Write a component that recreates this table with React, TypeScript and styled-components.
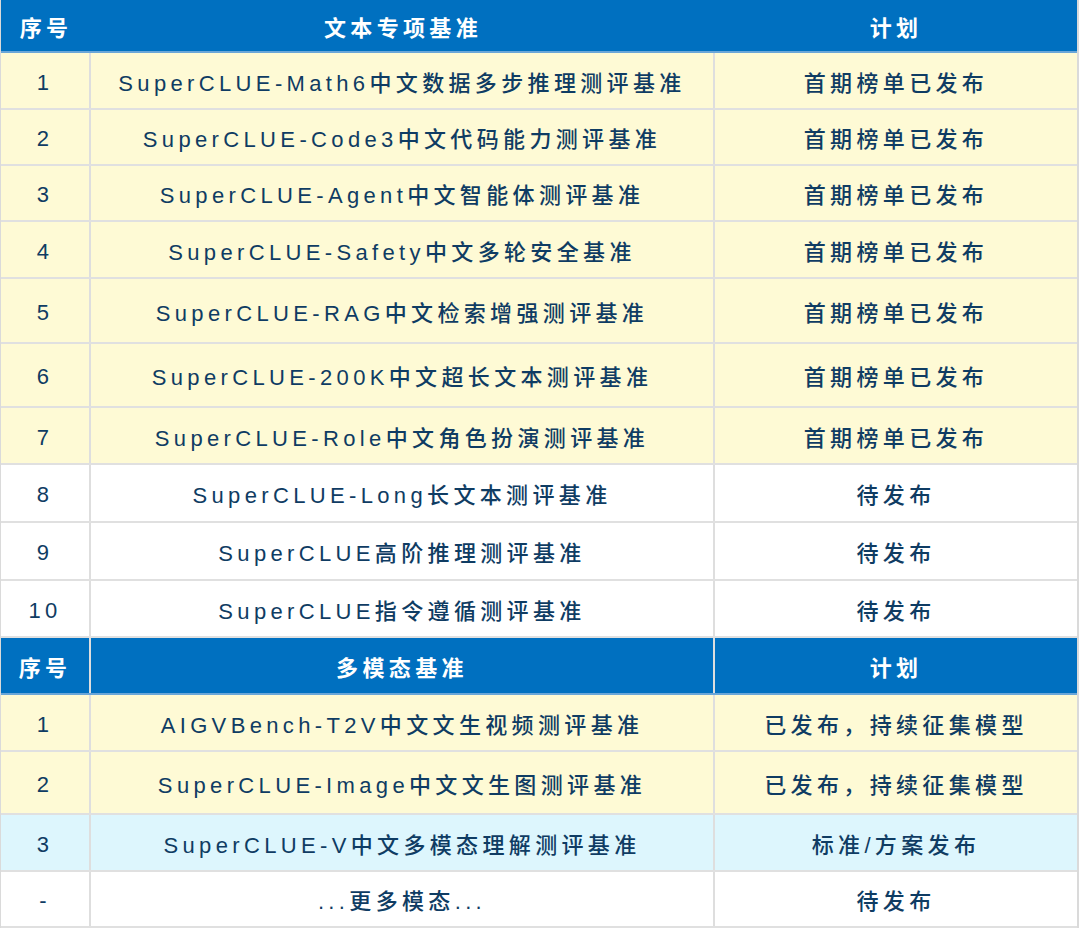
import React from "react";
import styled, { createGlobalStyle, css } from "styled-components";

const Global = createGlobalStyle`
  html, body { margin: 0; padding: 0; background: #ffffff; }
  body { font-family: "Liberation Sans", "Noto Sans CJK SC", sans-serif; }
`;

type Variant = "head" | "yellow" | "white" | "blue";

const bgMap: Record<Variant, string> = {
  head: "#0070c0",
  yellow: "#fefad5",
  white: "#ffffff",
  blue: "#ddf6fd",
};

const Table = styled.div`
  width: 1079px;
  display: flex;
  flex-direction: column;
  border-left: 1px solid #dadada;
  border-right: 2px solid #dadada;
  box-sizing: border-box;
`;

const Row = styled.div<{ $h: number; $v: Variant }>`
  display: grid;
  grid-template-columns: 90px 624px 1fr;
  height: ${(p) => p.$h}px;
  box-sizing: border-box;
  background: ${(p) => bgMap[p.$v]};
  border-bottom: 2px solid #e0e0e0;
  ${(p) =>
    p.$v === "head" &&
    css`
      border-bottom-color: #6aa6d8;
    `}
`;

const Cell = styled.div<{ $v: Variant; $divider: boolean; $latinOnly?: boolean }>`
  display: flex;
  align-items: center;
  justify-content: center;
  box-sizing: border-box;
  font-size: 22px;
  letter-spacing: 4.35px;
  padding-top: ${(p) => (p.$latinOnly ? "4px" : "0")};
  white-space: nowrap;
  color: ${(p) => (p.$v === "head" ? "#ffffff" : "#0f3c63")};
  font-weight: ${(p) => (p.$v === "head" ? 700 : 500)};
  border-right: ${(p) => (p.$divider ? "2px solid #dedede" : "none")};
`;

type RowData = { n: string; name: string; plan: string; v: Variant; h: number; divider?: boolean };

const rows: RowData[] = [
  { n: "序号", name: "文本专项基准", plan: "计划", v: "head", h: 53, divider: false },
  { n: "1", name: "SuperCLUE-Math6中文数据多步推理测评基准", plan: "首期榜单已发布", v: "yellow", h: 57 },
  { n: "2", name: "SuperCLUE-Code3中文代码能力测评基准", plan: "首期榜单已发布", v: "yellow", h: 56 },
  { n: "3", name: "SuperCLUE-Agent中文智能体测评基准", plan: "首期榜单已发布", v: "yellow", h: 56 },
  { n: "4", name: "SuperCLUE-Safety中文多轮安全基准", plan: "首期榜单已发布", v: "yellow", h: 57 },
  { n: "5", name: "SuperCLUE-RAG中文检索增强测评基准", plan: "首期榜单已发布", v: "yellow", h: 65 },
  { n: "6", name: "SuperCLUE-200K中文超长文本测评基准", plan: "首期榜单已发布", v: "yellow", h: 64 },
  { n: "7", name: "SuperCLUE-Role中文角色扮演测评基准", plan: "首期榜单已发布", v: "yellow", h: 57 },
  { n: "8", name: "SuperCLUE-Long长文本测评基准", plan: "待发布", v: "white", h: 58 },
  { n: "9", name: "SuperCLUE高阶推理测评基准", plan: "待发布", v: "white", h: 58 },
  { n: "10", name: "SuperCLUE指令遵循测评基准", plan: "待发布", v: "white", h: 57 },
  { n: "序号", name: "多模态基准", plan: "计划", v: "head", h: 57, divider: true },
  { n: "1", name: "AIGVBench-T2V中文文生视频测评基准", plan: "已发布，持续征集模型", v: "yellow", h: 57 },
  { n: "2", name: "SuperCLUE-Image中文文生图测评基准", plan: "已发布，持续征集模型", v: "yellow", h: 63 },
  { n: "3", name: "SuperCLUE-V中文多模态理解测评基准", plan: "标准/方案发布", v: "blue", h: 57 },
  { n: "-", name: "...更多模态...", plan: "待发布", v: "white", h: 56 },
];

export default function App() {
  return (
    <>
      <Global />
      <Table>
        {rows.map((r, i) => {
          const div = r.divider ?? true;
          const isHead = r.v === "head";
          return (
            <Row key={i} $h={r.h} $v={r.v}>
              <Cell $v={r.v} $divider={div} $latinOnly={!isHead}>{r.n}</Cell>
              <Cell $v={r.v} $divider={div}>{r.name}</Cell>
              <Cell $v={r.v} $divider={false}>{r.plan}</Cell>
            </Row>
          );
        })}
      </Table>
    </>
  );
}
